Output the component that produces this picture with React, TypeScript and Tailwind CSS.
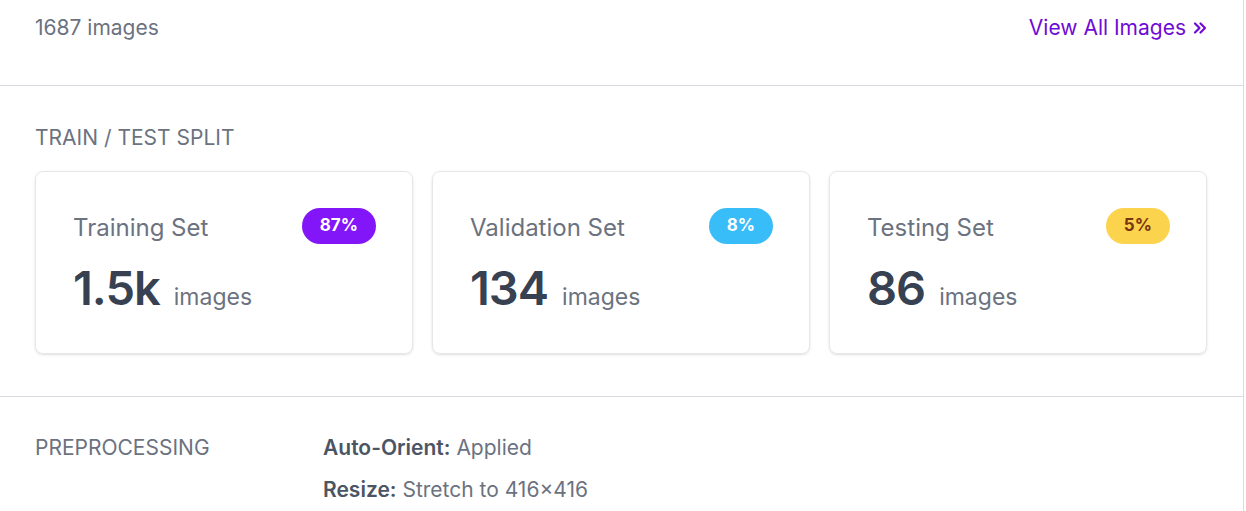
import React from 'react'

const splits = [
  { name: 'Training Set', count: '1.5k', pct: '87%', badge: 'bg-[#8315f9] text-white' },
  { name: 'Validation Set', count: '134', pct: '8%', badge: 'bg-[#38bdf8] text-white' },
  { name: 'Testing Set', count: '86', pct: '5%', badge: 'bg-[#fcd34d] text-[#78350f]' }
]

const preprocessing = [
  { label: 'Auto-Orient:', value: 'Applied' },
  { label: 'Resize:', value: 'Stretch to 416×416' }
]

const DoubleChevron = () => (
  <svg viewBox="0 0 14 14" className="w-[14px] h-[14px]" fill="none" stroke="currentColor" strokeWidth={2.2} strokeLinecap="round" strokeLinejoin="round">
    <path d="M2 2.5l4.5 4.5L2 11.5" />
    <path d="M7.5 2.5l4.5 4.5-4.5 4.5" />
  </svg>
)

const App: React.FC = () => {
  return (
    <div className="min-h-screen bg-white font-['Inter','Noto_Sans',sans-serif]">
      <div className="w-[1244px] border-r border-[#d8dbe0]">
        {/* header row */}
        <div className="flex items-center justify-between px-[35px] pt-[14px] pb-[43px] border-b border-[#d8dbe0]">
          <span className="text-[21px] leading-[28px] text-[#6b7280]">1687 images</span>
          <a className="flex items-center gap-[7px] pr-[1px] text-[21px] leading-[28px] text-[#6f0bd6]">
            View All Images
            <DoubleChevron />
          </a>
        </div>

        {/* train / test split */}
        <div className="px-[35px] pt-[38px] pb-[42px] border-b border-[#d8dbe0]">
          <h3 className="text-[21px] leading-[28px] uppercase text-[#6b7280]">Train / Test Split</h3>
          <div className="grid grid-cols-3 gap-[19px] mt-[19px] w-[1172px]">
            {splits.map(s => (
              <div
                key={s.name}
                className="h-[183px] rounded-lg border border-[#e5e7eb] shadow-sm pl-[37px] pr-[36px] pt-[36px]"
              >
                <div className="flex items-start justify-between">
                  <span className="pt-[2px] text-[24px] leading-[36px] text-[#6b7280]">{s.name}</span>
                  <span
                    className={`h-[36px] px-[18px] flex items-center justify-center rounded-full text-[17px] font-bold ${s.badge}`}
                  >
                    {s.pct}
                  </span>
                </div>
                <div className="flex items-baseline gap-[14px] mt-[18px]">
                  <span className="text-[47px] leading-none font-semibold tracking-[-1px] text-[#374151]">{s.count}</span>
                  <span className="text-[23px] text-[#6b7280]">images</span>
                </div>
              </div>
            ))}
          </div>
        </div>

        {/* preprocessing */}
        <div className="flex px-[35px] pt-[37px] pb-[20px]">
          <h3 className="w-[288px] text-[21px] leading-[28px] uppercase text-[#6b7280]">Preprocessing</h3>
          <div className="flex flex-col gap-[14px]">
            {preprocessing.map(p => (
              <div key={p.label} className="text-[21px] leading-[28px] text-[#6b7280]">
                <span className="font-semibold text-[#4b5563]">{p.label}</span> {p.value}
              </div>
            ))}
          </div>
        </div>
      </div>
    </div>
  )
}

export default App
